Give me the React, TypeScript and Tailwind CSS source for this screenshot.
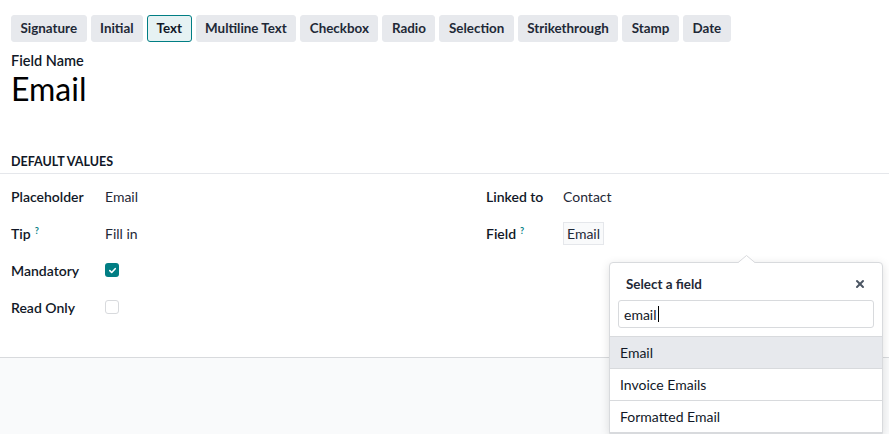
import { X } from "lucide-react";

const TYPES = [
  "Signature",
  "Initial",
  "Text",
  "Multiline Text",
  "Checkbox",
  "Radio",
  "Selection",
  "Strikethrough",
  "Stamp",
  "Date",
];

function Help() {
  return <sup className="ml-1 text-[9px] font-bold text-[#017e84]">?</sup>;
}

function Check({ on }: { on?: boolean }) {
  return on ? (
    <span className="flex h-[14px] w-[14px] items-center justify-center rounded-[3px] bg-[#017e84]">
      <svg viewBox="0 0 10 10" className="h-[9px] w-[9px]">
        <path d="M2 5.2 4.1 7.2 8 3" fill="none" stroke="white" strokeWidth="1.8" strokeLinecap="round" strokeLinejoin="round" />
      </svg>
    </span>
  ) : (
    <span className="block h-[14px] w-[14px] rounded-[3px] border border-[#d8dadd] bg-white" />
  );
}

function Row({ label, help, children }: { label: string; help?: boolean; children: React.ReactNode }) {
  return (
    <div className="flex h-[37px] items-center">
      <div className="w-[94px] font-semibold text-[#111827]">
        {label}
        {help && <Help />}
      </div>
      <div className="flex-1 text-[#1f2937]">{children}</div>
    </div>
  );
}

export default function App() {
  return (
    <div
      className="relative h-[434px] w-[889px] overflow-hidden bg-white text-[14px] text-[#111827]"
      style={{ fontFamily: "Lato, 'Noto Sans', sans-serif" }}
    >
      <div className="px-[11px] pt-[15px]">
        {/* Type buttons */}
        <div className="flex gap-[4px]">
          {TYPES.map((t) => (
            <button
              key={t}
              type="button"
              className={
                t === "Text"
                  ? "h-[27px] rounded-[3px] border border-[#017e84] bg-[#e6f2f3] px-[8.5px] text-[13.4px] font-bold text-[#111827]"
                  : "h-[27px] rounded-[3px] border border-[#e7e9ed] bg-[#e7e9ed] px-[8.5px] text-[13.4px] font-bold text-[#1f2937]"
              }
            >
              {t}
            </button>
          ))}
        </div>

        <div className="mt-[10px] text-[14.5px] font-semibold leading-[18px]">Field Name</div>
        <div className="text-[32px] leading-[38px] text-black">Email</div>
      </div>

      {/* Default values */}
      <div className="mt-[45px] border-b border-[#e5e7eb] px-[11px] pb-[1px] text-[12.5px] font-bold uppercase text-[#111827]">
        Default Values
      </div>

      <div className="flex px-[11px] pt-[4px]">
        <div className="w-[475px]">
          <Row label="Placeholder">Email</Row>
          <Row label="Tip" help>
            Fill in
          </Row>
          <Row label="Mandatory">
            <Check on />
          </Row>
          <Row label="Read Only">
            <Check />
          </Row>
        </div>
        <div className="flex-1">
          <div className="flex h-[37px] items-center">
            <div className="w-[77px] font-semibold">Linked to</div>
            <div className="text-[#1f2937]">Contact</div>
          </div>
          <div className="flex h-[37px] items-center">
            <div className="w-[77px] font-semibold">
              Field
              <Help />
            </div>
            <div className="border border-[#e5e7eb] bg-[#f9fafb] px-[3px] py-[2px] leading-[17px] text-[#1f2937]">
              Email
            </div>
          </div>
        </div>
      </div>

      {/* Footer area */}
      <div className="mt-[31px] h-[100px] border-t border-[#d8dadd] bg-[#f9fafb]" />

      {/* Field selector popover */}
      <div className="absolute left-[609px] top-[262px] w-[274px] rounded-t-[4px] border border-[#d8dadd] bg-white shadow-[0_2px_10px_rgba(0,0,0,0.12)]">
        <svg className="absolute -top-[8px] left-[127px]" width="20" height="9" viewBox="0 0 20 9">
          <path d="M0 8.5 9.5 0.5 19 8.5" fill="white" stroke="#d8dadd" strokeWidth="1" />
          <rect x="0" y="8" width="20" height="2" fill="white" />
        </svg>
        <div className="flex items-center justify-between px-[16px] pt-[11px] pb-[6px]">
          <span className="text-[13.4px] font-bold text-[#1f2937]">Select a field</span>
          <X className="h-[12px] w-[12px] text-[#4b5563]" strokeWidth={4} />
        </div>
        <div className="px-[8px] pb-[8px]">
          <div className="flex h-[28px] items-center rounded-[3px] border border-[#d8dadd] px-[5px] text-[14px] text-[#111827]">
            email<span className="ml-px inline-block h-[16px] w-px bg-black" />
          </div>
        </div>
        <div className="border-t border-[#d8dadd]">
          <div className="flex h-[32px] items-center border-b border-[#d8dadd] bg-[#e7e9ed] px-[10px]">Email</div>
          <div className="flex h-[32px] items-center border-b border-[#d8dadd] px-[10px]">Invoice Emails</div>
          <div className="flex h-[32px] items-center border-b border-[#d8dadd] px-[10px]">Formatted Email</div>
        </div>
      </div>
    </div>
  );
}
